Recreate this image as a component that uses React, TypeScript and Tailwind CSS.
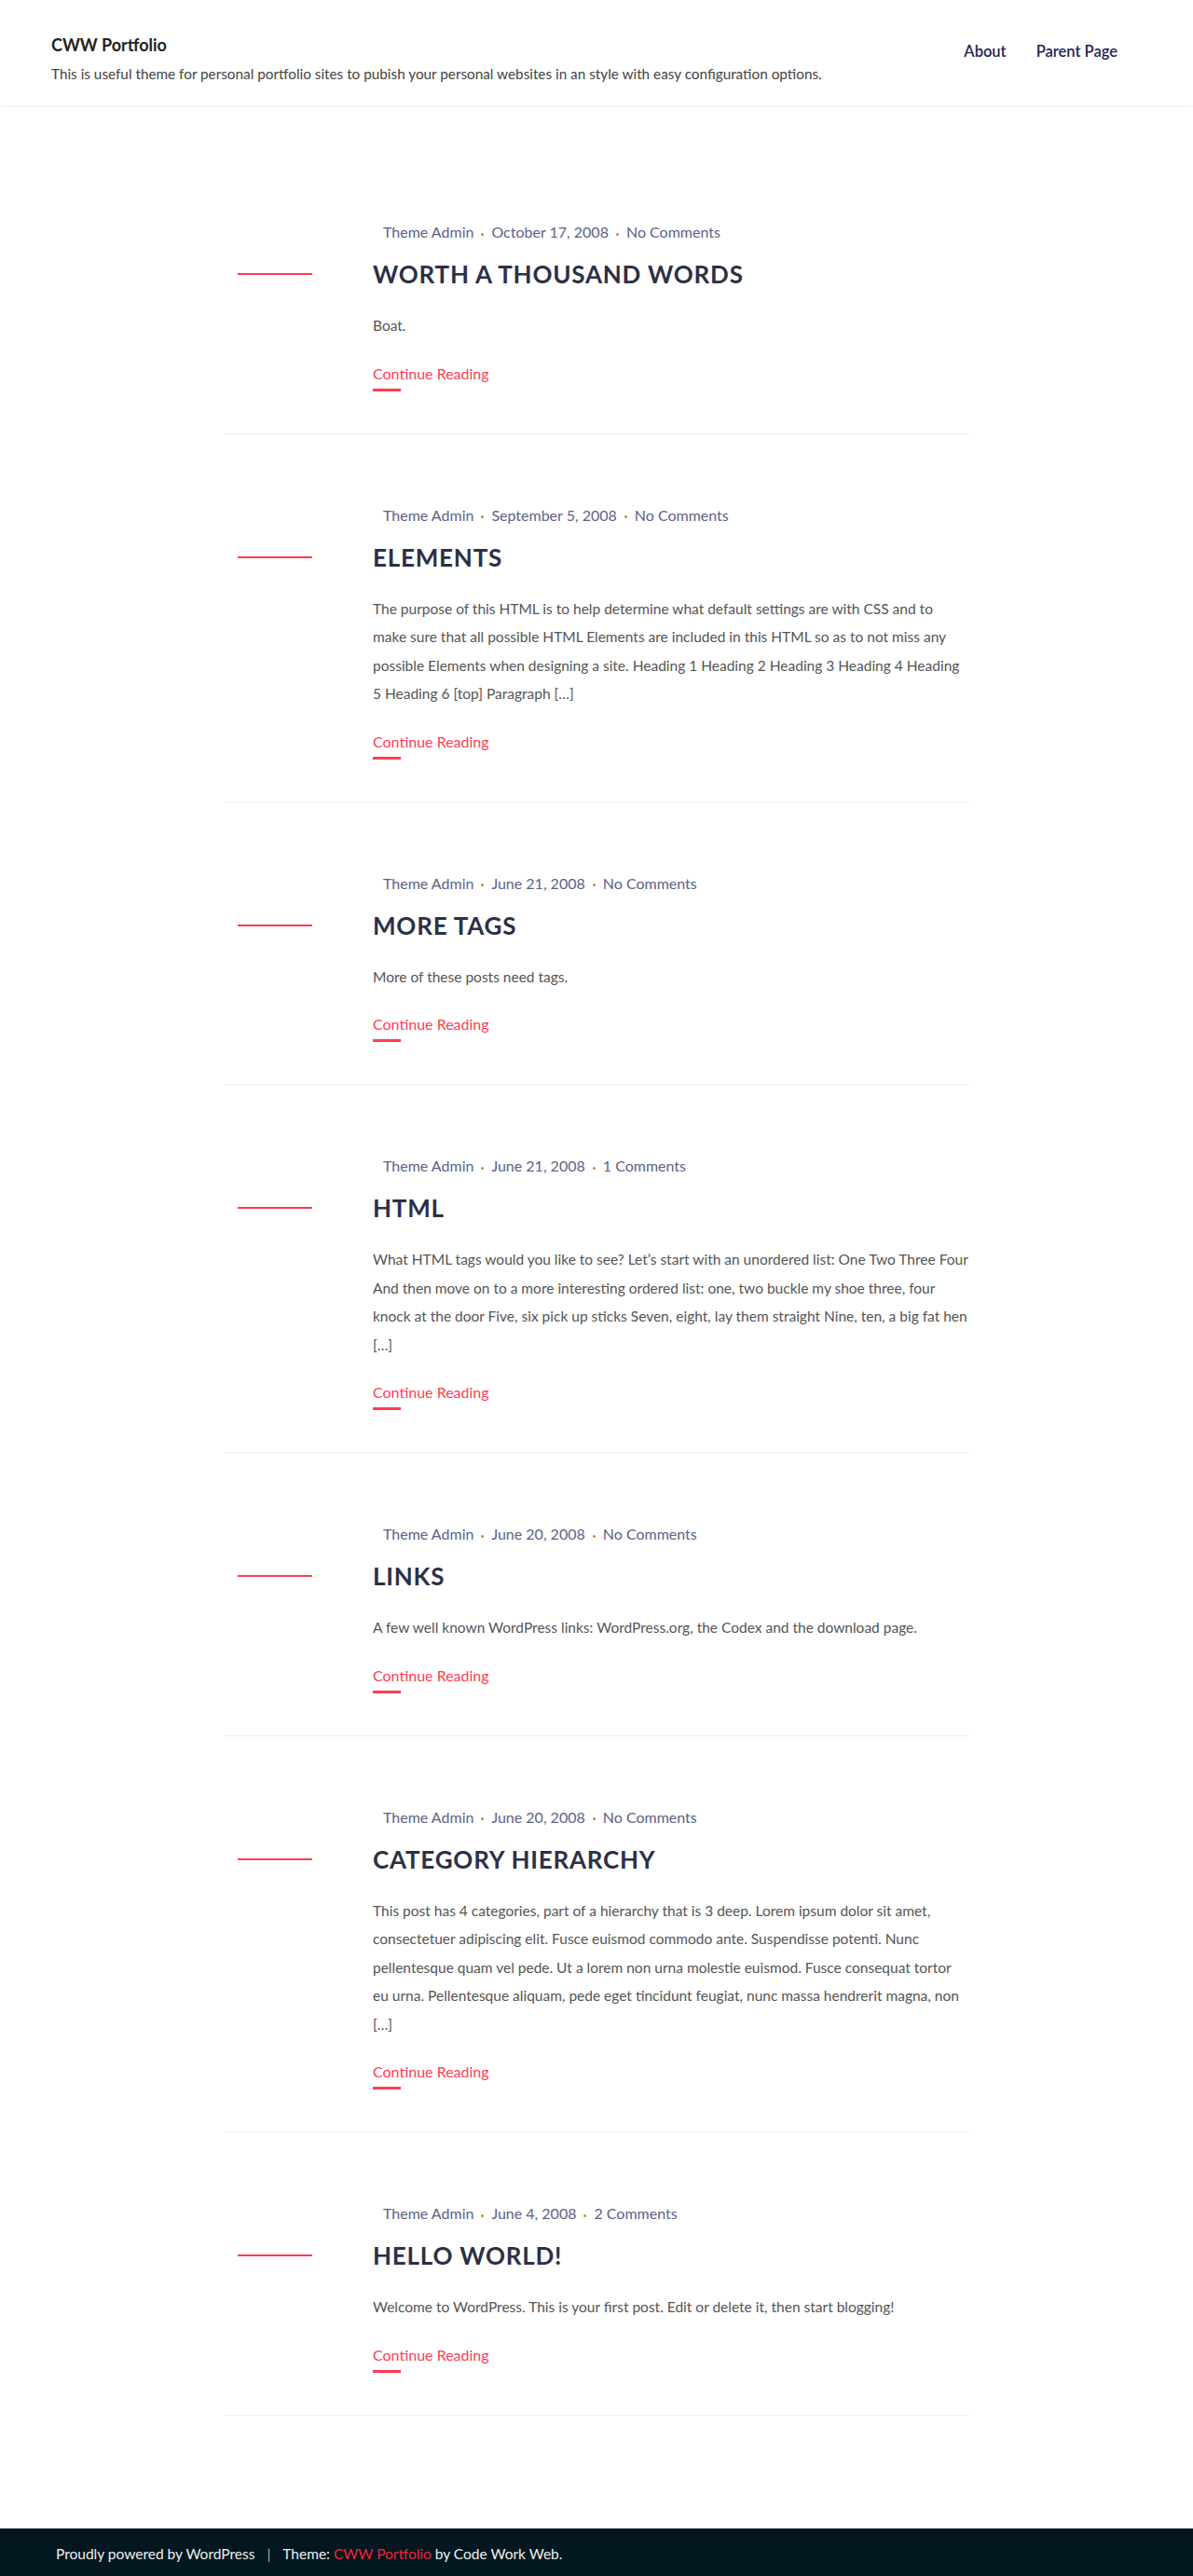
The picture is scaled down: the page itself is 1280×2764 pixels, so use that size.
import React from 'react';

const posts = [
    {
        title: 'WORTH A THOUSAND WORDS',
        date: 'October 17, 2008',
        comments: 'No Comments',
        body: 'Boat.'
    },
    {
        title: 'ELEMENTS',
        date: 'September 5, 2008',
        comments: 'No Comments',
        body: 'The purpose of this HTML is to help determine what default settings are with CSS and to make sure that all possible HTML Elements are included in this HTML so as to not miss any possible Elements when designing a site. Heading 1 Heading 2 Heading 3 Heading 4 Heading 5 Heading 6 [top] Paragraph […]'
    },
    {
        title: 'MORE TAGS',
        date: 'June 21, 2008',
        comments: 'No Comments',
        body: 'More of these posts need tags.'
    },
    {
        title: 'HTML',
        date: 'June 21, 2008',
        comments: '1 Comments',
        body: 'What HTML tags would you like to see? Let’s start with an unordered list: One Two Three Four And then move on to a more interesting ordered list: one, two buckle my shoe three, four knock at the door Five, six pick up sticks Seven, eight, lay them straight Nine, ten, a big fat hen […]'
    },
    {
        title: 'LINKS',
        date: 'June 20, 2008',
        comments: 'No Comments',
        body: 'A few well known WordPress links: WordPress.org, the Codex and the download page.'
    },
    {
        title: 'CATEGORY HIERARCHY',
        date: 'June 20, 2008',
        comments: 'No Comments',
        body: 'This post has 4 categories, part of a hierarchy that is 3 deep. Lorem ipsum dolor sit amet, consectetuer adipiscing elit. Fusce euismod commodo ante. Suspendisse potenti. Nunc pellentesque quam vel pede. Ut a lorem non urna molestie euismod. Fusce consequat tortor eu urna. Pellentesque aliquam, pede eget tincidunt feugiat, nunc massa hendrerit magna, non […]'
    },
    {
        title: 'HELLO WORLD!',
        date: 'June 4, 2008',
        comments: '2 Comments',
        body: 'Welcome to WordPress. This is your first post. Edit or delete it, then start blogging!'
    }
];

const Dot = () => <span className="mx-[8px] inline-block h-[3px] w-[3px] translate-y-[2px] rounded-full bg-[#d4842e]" />;

const Post = ({ post }: any) => (
    <article className="grid grid-cols-[160px_1fr] border-b border-[#efefef] pb-[45px] pt-[75px] first:pt-0">
        <div className="col-start-2 flex items-center pl-[11px] text-[16px] leading-[24px] text-[#5b6287]">
            <a href="#">Theme Admin</a>
            <Dot />
            <a href="#">{post.date}</a>
            <Dot />
            <a href="#">{post.comments}</a>
        </div>
        <div className="col-start-1 mt-[16px] flex items-center pl-[15px]">
            <div className="h-[2px] w-[80px] bg-[#ff3d51]" />
        </div>
        <h2 className="col-start-2 mt-[16px] text-[26px] font-bold leading-[34px] tracking-[0.03em] text-[#2c3046]">
            <a href="#">{post.title}</a>
        </h2>
        <p className="col-start-2 mt-[23px] text-[15.5px] leading-[30.5px] text-[#555]">{post.body}</p>
        <div className="col-start-2 mt-[23px]">
            <a href="#" className="block text-[16px] leading-[26px] text-[#ff3d51]">Continue Reading</a>
            <div className="mt-[3px] h-[3px] w-[30px] bg-[#ff3d51]" />
        </div>
    </article>
);

const App = () => {
    return (
        <div className="min-h-screen bg-white font-['Lato',sans-serif]">
            <header className="flex items-start justify-between border-b border-[#f3f3f3] pb-[22px] pl-[55px] pr-[81px] pt-[34px] shadow-[0_2px_3px_rgba(0,0,0,0.02)]">
                <div>
                    <h1 className="text-[18px] font-bold leading-[28px] text-[#222]">CWW Portfolio</h1>
                    <p className="mt-[5px] text-[15.3px] leading-[24px] text-[#444]">
                        This is useful theme for personal portfolio sites to pubish your personal websites in an style with easy configuration options.
                    </p>
                </div>
                <nav className="mt-[9px] flex gap-[32px] text-[16.5px] font-semibold leading-[24px] text-[#1c2452]">
                    <a href="#">About</a>
                    <a href="#">Parent Page</a>
                </nav>
            </header>

            <main className="pb-[121px] pt-[123px]">
                <div className="mx-auto w-[800px]">
                    {posts.map((post) => (
                        <Post key={post.title} post={post} />
                    ))}
                </div>
            </main>

            <footer className="bg-[#021720] py-[15px] pl-[60px] text-[15.5px] leading-[24px] text-[#f0f0f0]">
                Proudly powered by WordPress
                <span className="mx-[13px] text-[#aab0b5]">|</span>
                Theme: <a href="#" className="text-[#f0243d]">CWW Portfolio</a> by Code Work Web.
            </footer>
        </div>
    );
};

export default App;
